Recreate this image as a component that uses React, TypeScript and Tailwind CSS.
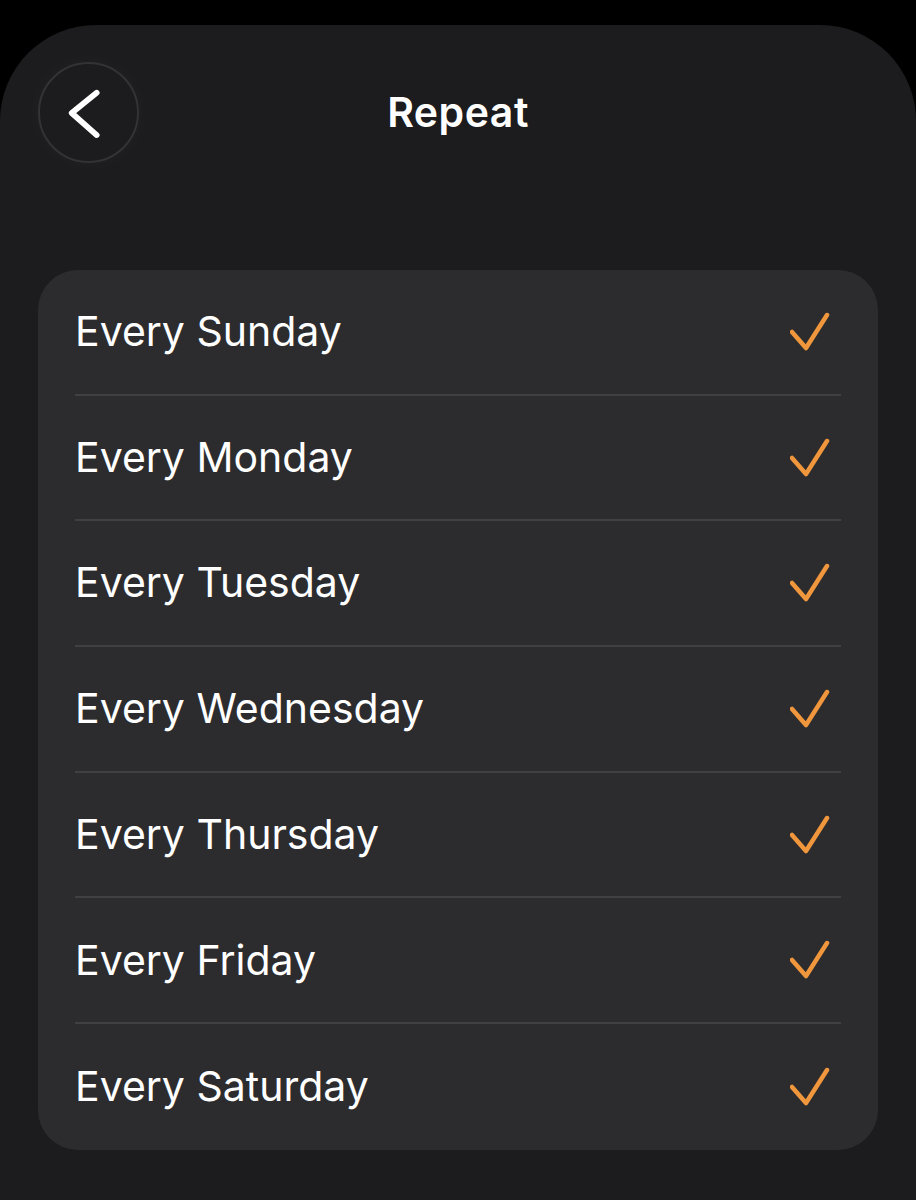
const days = ['Sunday', 'Monday', 'Tuesday', 'Wednesday', 'Thursday', 'Friday', 'Saturday']

function Check() {
  return (
    <svg width="40" height="40" viewBox="0 0 40 40" fill="none" className="mr-[11px]">
      <path d="M2 20 L16 36 L37 3" stroke="#f0963c" strokeWidth="4.5" strokeLinecap="round" strokeLinejoin="round" />
    </svg>
  )
}

export default function App() {
  return (
    <div className="h-[1200px] bg-black pt-[25px] font-['Inter','Liberation_Sans',sans-serif] text-white overflow-hidden">
      <div className="h-full rounded-t-[96px] bg-[#1c1c1e]">
        <div className="grid grid-cols-[101px_1fr_101px] items-center px-[38px] pt-[37px]">
          <button className="flex h-[101px] w-[101px] items-center justify-center rounded-full border-2 border-[#333335] bg-[#1c1c1e] shadow-[0_0_20px_rgba(255,255,255,0.03)]">
            <svg width="101" height="101" viewBox="0 0 101 101" fill="none">
              <path d="M59 30 L33 51 L59 74" stroke="white" strokeWidth="6" strokeLinecap="round" strokeLinejoin="round" />
            </svg>
          </button>
          <h1 className="text-center text-[41px] font-semibold tracking-[0.5px]">Repeat</h1>
          <div />
        </div>

        <div className="mx-[38px] mt-[107px] rounded-[40px] bg-[#2c2c2e]">
          {days.map((d, i) => (
            <div
              key={d}
              className={
                'mx-[37px] flex h-[125.7px] items-center justify-between ' +
                (i < days.length - 1 ? 'border-b-2 border-[#404042]' : '')
              }
            >
              <span className="text-[41px] font-normal">Every {d}</span>
              <Check />
            </div>
          ))}
        </div>
      </div>
    </div>
  )
}
